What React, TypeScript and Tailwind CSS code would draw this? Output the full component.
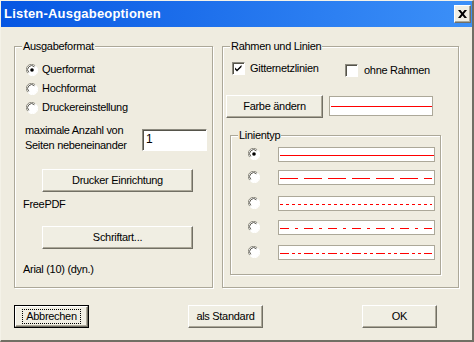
import React from "react";

const bevel =
  "border border-t-white border-l-white border-r-[#716f64] border-b-[#716f64] shadow-[inset_-1px_-1px_0_#aca899]";

function Btn({ label, className = "" }: { label: string; className?: string }) {
  return (
    <div className={`flex items-center justify-center bg-[#f0eee3] ${bevel} ${className}`}>
      {label}
    </div>
  );
}

function Radio({ checked = false }: { checked?: boolean }) {
  return (
    <svg width="12" height="12" viewBox="0 0 12 12" className="shrink-0">
      <circle cx="6" cy="6" r="5.5" fill="#fff" />
      <path d="M1.8 9.2 A5 5 0 0 1 9.2 1.8" stroke="#8c8a7f" strokeWidth="1" fill="none" />
      <path d="M2.8 8.4 A3.8 3.8 0 0 1 8.4 2.8" stroke="#55534a" strokeWidth="1" fill="none" />
      <path d="M10.2 2.8 A5 5 0 0 1 2.8 10.2" stroke="#fff" strokeWidth="1" fill="none" />
      {checked && <circle cx="6" cy="6" r="1.8" fill="#000" />}
    </svg>
  );
}

function Check({ checked = false }: { checked?: boolean }) {
  return (
    <div className="w-[13px] h-[13px] shrink-0 bg-white border border-t-[#8c8a7f] border-l-[#8c8a7f] border-r-white border-b-white shadow-[inset_1px_1px_0_#55534a]">
      {checked && (
        <svg width="11" height="11" viewBox="0 0 11 11">
          <path d="M2 4.5 L4 6.5 L8.5 2 L8.5 4 L4 8.5 L2 6.5 Z" fill="#000" />
        </svg>
      )}
    </div>
  );
}

function Group({
  label,
  className = "",
  children,
}: {
  label: string;
  className?: string;
  children: React.ReactNode;
}) {
  return (
    <div
      className={`relative border border-[#aca899] shadow-[inset_1px_1px_0_#fff,1px_1px_0_#fff] ${className}`}
    >
      <span className="absolute -top-[8px] left-[7px] bg-[#efece0] px-[1px] leading-[14px]">
        {label}
      </span>
      {children}
    </div>
  );
}

function LineBox({ dash, className = "" }: { dash?: string; className?: string }) {
  return (
    <div className={`w-[157px] h-[15px] bg-white border border-[#aca899] ${className}`}>
      <svg width="155" height="13">
        <line
          x1="1"
          x2={dash ? 153 : 155}
          y1="7.5"
          y2="7.5"
          stroke="#ff0000"
          strokeWidth="1"
          strokeDasharray={dash}
          shapeRendering="crispEdges"
        />
      </svg>
    </div>
  );
}

export default function App() {
  const rows = [
    { dash: undefined, checked: true, mt: "" },
    { dash: "18 6", mt: "mt-[8px]" },
    { dash: "3 3", mt: "mt-[11px]" },
    { dash: "9 6 3 6", mt: "mt-[9px]" },
    { dash: "9 3 3 3 3 3", mt: "mt-[10px]" },
  ];

  return (
    <div
      className="w-[474px] h-[342px] flex flex-col bg-[#efece0] text-[11px] tracking-[-0.3px] text-black border-l border-t border-l-[#f4f2e8] border-t-[#f4f2e8] border-r-2 border-b-2 border-r-[#716f64] border-b-[#716f64]"
      style={{ fontFamily: '"Liberation Sans", Arial, sans-serif' }}
    >
      {/* Titelleiste */}
      <div className="h-[26px] flex items-center justify-between bg-gradient-to-r from-[#0656e2] to-[#3c90f8] pl-[3px] pr-[1px]">
        <span className="text-white font-bold text-[13px] tracking-[0.2px]">Listen-Ausgabeoptionen</span>
        <div className={`w-[17px] h-[18px] flex items-center justify-center bg-[#f0eee3] ${bevel}`}>
          <svg width="9" height="8" viewBox="0 0 9 8">
            <path d="M0 0h2.5L4.5 2.5L6.5 0H9L5.8 4L9 8H6.5L4.5 5.5L2.5 8H0L3.2 4Z" fill="#000" />
          </svg>
        </div>
      </div>

      {/* Gruppen */}
      <div className="flex gap-[9px] pl-[13px] pt-[19px]">
        <Group label="Ausgabeformat" className="w-[199px] h-[242px]">
          <div className="flex flex-col pt-[13px]">
            {["Querformat", "Hochformat", "Druckereinstellung"].map((t, i) => (
              <div key={t} className="h-[19px] flex items-center pl-[11px] gap-[4px]">
                <Radio checked={i === 0} />
                <span>{t}</span>
              </div>
            ))}
            <div className="flex items-start mt-[6px] pl-[10px]">
              <div className="w-[117px] leading-[15px]">
                maximale Anzahl von
                <br />
                Seiten nebeneinander
              </div>
              <div className="mt-[6px] w-[65px] h-[22px] bg-white border border-t-[#8c8a7f] border-l-[#8c8a7f] border-r-white border-b-white shadow-[inset_1px_1px_0_#55534a] pl-[3px] text-[12px] leading-[19px]">
                1
              </div>
            </div>
            <Btn label="Drucker Einrichtung" className="mt-[16px] ml-[27px] w-[151px] h-[23px]" />
            <div className="mt-[5px] pl-[8px] leading-[15px]">FreePDF</div>
            <Btn label="Schriftart..." className="mt-[14px] ml-[27px] w-[151px] h-[23px]" />
            <div className="mt-[13px] pl-[8px] leading-[15px]">Arial (10) (dyn.)</div>
          </div>
        </Group>

        <Group label="Rahmen und Linien" className="w-[237px] h-[242px]">
          <div className="flex flex-col pt-[13px]">
            <div className="flex items-start pl-[9px]">
              <div className="flex items-center gap-[5px] w-[113px]">
                <Check checked />
                <span>Gitternetzlinien</span>
              </div>
              <div className="flex items-center gap-[6px] mt-[2px]">
                <Check />
                <span>ohne Rahmen</span>
              </div>
            </div>
            <div className="flex items-center pl-[3px] mt-[16px] gap-[6px]">
              <Btn label="Farbe ändern" className="w-[97px] h-[23px]" />
              <div className="w-[104px] h-[20px] bg-white border border-[#aca899] flex items-center">
                <div className="ml-[1px] w-[101px] h-[1px] bg-[#ff0000]" />
              </div>
            </div>
            <Group label="Linientyp" className="ml-[7px] mt-[17px] w-[211px] h-[140px]">
              <div className="flex flex-col pt-[11px]">
                {rows.map((r, i) => (
                  <div key={i} className={`flex items-center pl-[17px] gap-[18px] ${r.mt}`}>
                    <Radio checked={r.checked} />
                    <LineBox dash={r.dash} />
                  </div>
                ))}
              </div>
            </Group>
          </div>
        </Group>
      </div>

      {/* Schaltflächen */}
      <div className="flex gap-[99px] pl-[13px] mt-[17px]">
        <div className="w-[75px] h-[23px] border border-black">
          <div className={`w-full h-full flex items-center justify-center bg-[#f0eee3] ${bevel}`}>
            <span className="border border-dotted border-black px-[3px] leading-[13px]">Abbrechen</span>
          </div>
        </div>
        <Btn label="als Standard" className="w-[75px] h-[23px]" />
        <Btn label="OK" className="w-[75px] h-[23px]" />
      </div>
    </div>
  );
}
